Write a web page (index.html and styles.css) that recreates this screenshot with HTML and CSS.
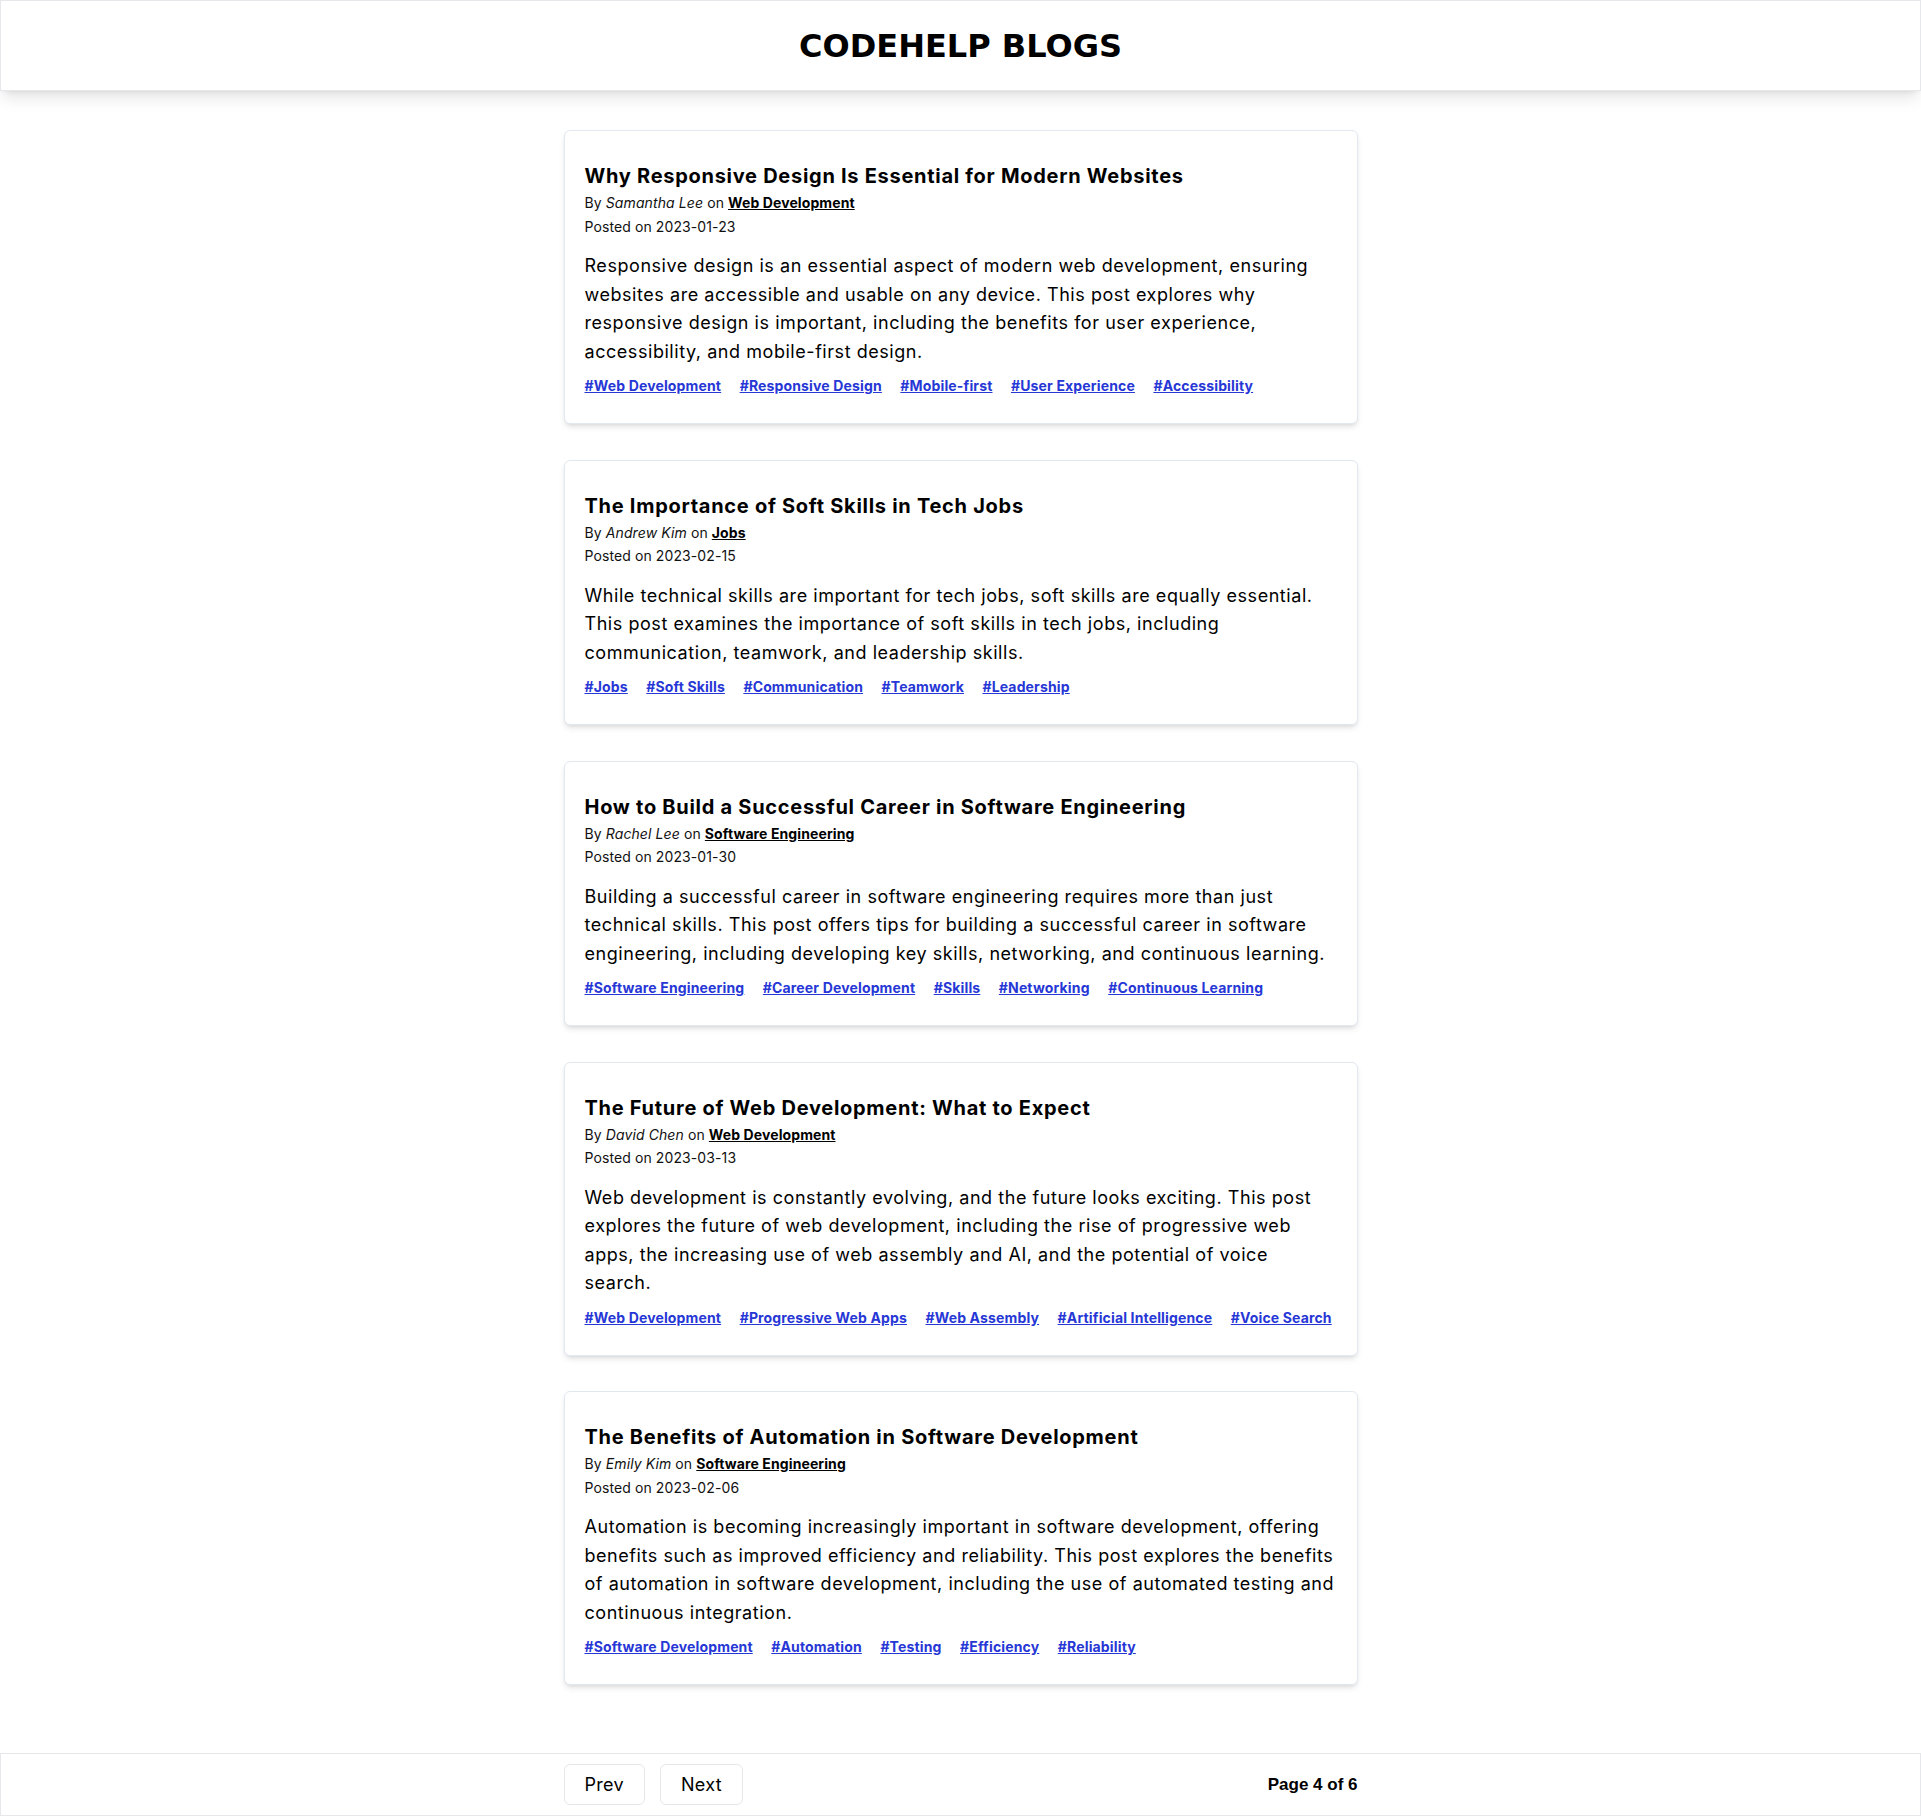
FILE: index.html
```html
<!DOCTYPE html>
<html lang="en">
<head>
<meta charset="UTF-8">
<title>Codehelp Blogs</title>
<link rel="stylesheet" href="styles.css">
</head>
<body>
<div class="app">
  <header class="header">
    <h1 class="header-title">CODEHELP BLOGS</h1>
  </header>

  <main class="posts">
    <article class="card">
      <h2 class="card-title">Why Responsive Design Is Essential for Modern Websites</h2>
      <p class="byline">By <em>Samantha Lee</em> on <a class="category" href="#">Web Development</a></p>
      <p class="posted">Posted on 2023-01-23</p>
      <p class="content">Responsive design is an essential aspect of modern web development, ensuring websites are accessible and usable on any device. This post explores why responsive design is important, including the benefits for user experience, accessibility, and mobile-first design.</p>
      <div class="tags">
        <a href="#">#Web Development</a>
        <a href="#">#Responsive Design</a>
        <a href="#">#Mobile-first</a>
        <a href="#">#User Experience</a>
        <a href="#">#Accessibility</a>
      </div>
    </article>

    <article class="card">
      <h2 class="card-title">The Importance of Soft Skills in Tech Jobs</h2>
      <p class="byline">By <em>Andrew Kim</em> on <a class="category" href="#">Jobs</a></p>
      <p class="posted">Posted on 2023-02-15</p>
      <p class="content">While technical skills are important for tech jobs, soft skills are equally essential. This post examines the importance of soft skills in tech jobs, including communication, teamwork, and leadership skills.</p>
      <div class="tags">
        <a href="#">#Jobs</a>
        <a href="#">#Soft Skills</a>
        <a href="#">#Communication</a>
        <a href="#">#Teamwork</a>
        <a href="#">#Leadership</a>
      </div>
    </article>

    <article class="card">
      <h2 class="card-title">How to Build a Successful Career in Software Engineering</h2>
      <p class="byline">By <em>Rachel Lee</em> on <a class="category" href="#">Software Engineering</a></p>
      <p class="posted">Posted on 2023-01-30</p>
      <p class="content">Building a successful career in software engineering requires more than just technical skills. This post offers tips for building a successful career in software engineering, including developing key skills, networking, and continuous learning.</p>
      <div class="tags">
        <a href="#">#Software Engineering</a>
        <a href="#">#Career Development</a>
        <a href="#">#Skills</a>
        <a href="#">#Networking</a>
        <a href="#">#Continuous Learning</a>
      </div>
    </article>

    <article class="card">
      <h2 class="card-title">The Future of Web Development: What to Expect</h2>
      <p class="byline">By <em>David Chen</em> on <a class="category" href="#">Web Development</a></p>
      <p class="posted">Posted on 2023-03-13</p>
      <p class="content">Web development is constantly evolving, and the future looks exciting. This post explores the future of web development, including the rise of progressive web apps, the increasing use of web assembly and AI, and the potential of voice search.</p>
      <div class="tags">
        <a href="#">#Web Development</a>
        <a href="#">#Progressive Web Apps</a>
        <a href="#">#Web Assembly</a>
        <a href="#">#Artificial Intelligence</a>
        <a href="#">#Voice Search</a>
      </div>
    </article>

    <article class="card">
      <h2 class="card-title">The Benefits of Automation in Software Development</h2>
      <p class="byline">By <em>Emily Kim</em> on <a class="category" href="#">Software Engineering</a></p>
      <p class="posted">Posted on 2023-02-06</p>
      <p class="content">Automation is becoming increasingly important in software development, offering benefits such as improved efficiency and reliability. This post explores the benefits of automation in software development, including the use of automated testing and continuous integration.</p>
      <div class="tags">
        <a href="#">#Software Development</a>
        <a href="#">#Automation</a>
        <a href="#">#Testing</a>
        <a href="#">#Efficiency</a>
        <a href="#">#Reliability</a>
      </div>
    </article>
  </main>

  <footer class="footer">
    <div class="footer-inner">
      <div class="pager-buttons">
        <button class="pager-btn">Prev</button>
        <button class="pager-btn">Next</button>
      </div>
      <p class="page-info">Page 4 of 6</p>
    </div>
  </footer>
</div>
</body>
</html>
```

FILE: styles.css
```css
* {
  box-sizing: border-box;
}

html, body {
  margin: 0;
  padding: 0;
  background: #ffffff;
}

body {
  font-family: Inter, "Noto Sans", sans-serif;
  color: #000000;
}

.app {
  min-height: 100vh;
  display: flex;
  flex-direction: column;
}

.header {
  height: 91px;
  border: 1px solid #e5e7eb;
  background: #ffffff;
  box-shadow: 0 10px 15px -3px rgba(0, 0, 0, 0.1), 0 4px 6px -4px rgba(0, 0, 0, 0.1);
  display: flex;
  align-items: center;
  justify-content: center;
  position: relative;
  z-index: 1;
}

.header-title {
  margin: 0;
  font-family: "DejaVu Sans", sans-serif;
  font-weight: 700;
  font-size: 32px;
  line-height: 1;
  color: #000000;
}

.posts {
  flex: 1;
  width: 794px;
  margin: 0 auto;
  padding-top: 39px;
  padding-bottom: 60px;
  display: flex;
  flex-direction: column;
  gap: 35.5px;
}

.card {
  border: 1px solid #e2e8f0;
  border-radius: 6px;
  padding: 31px 20px 27px 20px;
  background: #ffffff;
  box-shadow: 0 4px 6px -1px rgba(0, 0, 0, 0.1), 0 2px 4px -2px rgba(0, 0, 0, 0.1);
}

.card-title {
  margin: 0;
  font-size: 20px;
  line-height: 28px;
  font-weight: 700;
  letter-spacing: 0.72px;
  color: #000000;
}

.byline {
  margin: 1px 0 0 0;
  font-size: 14px;
  line-height: 23.5px;
  letter-spacing: 0.1px;
  color: #111111;
}

.byline em {
  font-style: italic;
}

.category {
  color: #000000;
  font-weight: 700;
  text-decoration: underline;
}

.posted {
  margin: 0;
  font-size: 14px;
  line-height: 23.5px;
  letter-spacing: 0.1px;
  color: #111111;
}

.content {
  margin: 14px 0 0 0;
  font-size: 18px;
  line-height: 28.5px;
  letter-spacing: 0.55px;
  color: #000000;
}

.tags {
  margin-top: 10px;
  display: flex;
  flex-wrap: wrap;
  column-gap: 18.5px;
  font-size: 14px;
  line-height: 20px;
  letter-spacing: 0.15px;
}

.tags a {
  color: #2737d6;
  font-weight: 700;
  text-decoration: underline;
}

.footer {
  border: 1px solid #e5e7eb;
  background: #ffffff;
  height: 63px;
}

.footer-inner {
  width: 794px;
  height: 100%;
  margin: 0 auto;
  display: flex;
  align-items: center;
  justify-content: space-between;
}

.pager-buttons {
  display: flex;
  gap: 15px;
}

.pager-btn {
  font-family: Inter, "Noto Sans", sans-serif;
  font-size: 18px;
  line-height: 24px;
  letter-spacing: 0.3px;
  padding: 8px 20px;
  height: 41px;
  background: #ffffff;
  color: #000000;
  border: 1px solid #e5e7eb;
  border-radius: 6px;
  cursor: pointer;
}

.page-info {
  margin: 0;
  font-family: "Liberation Sans", Arial, sans-serif;
  font-weight: 700;
  font-size: 17px;
  color: #000000;
}
```
